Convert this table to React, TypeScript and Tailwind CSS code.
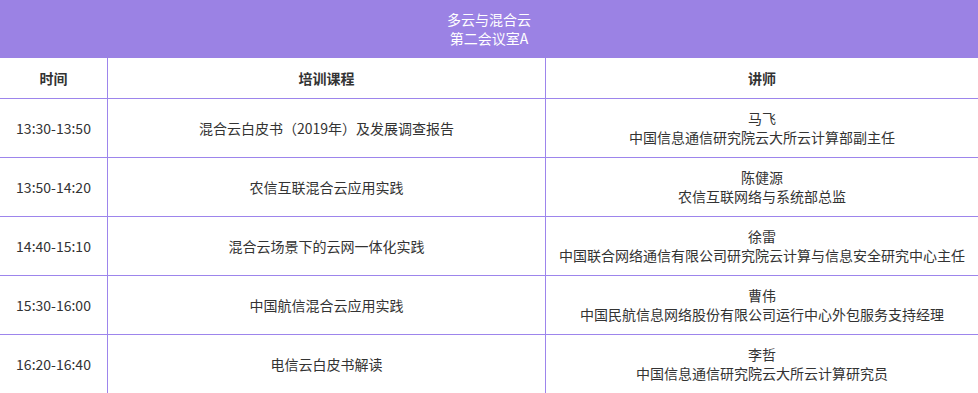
import React from 'react';

interface Session {
  time: string;
  course: string;
  speaker: string;
  title: string;
}

const sessions: Session[] = [
  { time: '13:30-13:50', course: '混合云白皮书（2019年）及发展调查报告', speaker: '马飞', title: '中国信息通信研究院云大所云计算部副主任' },
  { time: '13:50-14:20', course: '农信互联混合云应用实践', speaker: '陈健源', title: '农信互联网络与系统部总监' },
  { time: '14:40-15:10', course: '混合云场景下的云网一体化实践', speaker: '徐雷', title: '中国联合网络通信有限公司研究院云计算与信息安全研究中心主任' },
  { time: '15:30-16:00', course: '中国航信混合云应用实践', speaker: '曹伟', title: '中国民航信息网络股份有限公司运行中心外包服务支持经理' },
  { time: '16:20-16:40', course: '电信云白皮书解读', speaker: '李哲', title: '中国信息通信研究院云大所云计算研究员' },
];

const App: React.FC = () => {
  return (
    <div className="w-[978px] h-[393px] overflow-hidden bg-white font-['Microsoft_YaHei','Noto_Sans_CJK_SC',sans-serif] text-[14px] text-[#333]">
      {/* Title bar */}
      <div className="h-[58px] bg-[#9b82e4] text-white flex flex-col items-center justify-center leading-[19px]">
        <div>多云与混合云</div>
        <div>第二会议室A</div>
      </div>

      {/* Column headings */}
      <div className="grid grid-cols-[108px_438px_1fr] h-[41px] border-b border-[#9d85ec] font-bold">
        <div className="flex items-center justify-center border-r border-[#9d85ec]">时间</div>
        <div className="flex items-center justify-center border-r border-[#9d85ec]">培训课程</div>
        <div className="flex items-center justify-center">讲师</div>
      </div>

      {sessions.map((s) => (
        <div key={s.time} className="grid grid-cols-[108px_438px_1fr] h-[59px] border-b border-[#9d85ec]">
          <div className="flex items-center justify-center border-r border-[#9d85ec]">{s.time}</div>
          <div className="flex items-center justify-center border-r border-[#9d85ec]">{s.course}</div>
          <div className="flex flex-col items-center justify-center leading-[19px]">
            <div>{s.speaker}</div>
            <div>{s.title}</div>
          </div>
        </div>
      ))}
    </div>
  );
};

export default App;
